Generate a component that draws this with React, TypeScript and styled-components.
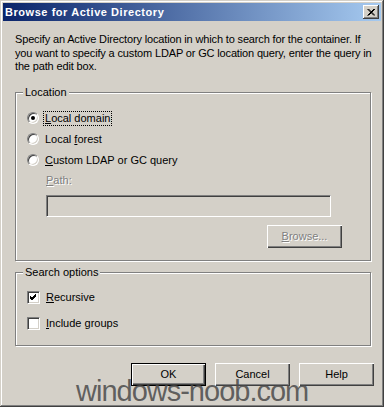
import styled, { createGlobalStyle } from "styled-components"

const GlobalStyle = createGlobalStyle`
  html, body {
    margin: 0;
    padding: 0;
    background: #d4d0c8;
  }
  * {
    box-sizing: border-box;
  }
`

const WindowFrame = styled.div`
  position: relative;
  width: 384px;
  height: 407px;
  padding: 3px;
  background: #d4d0c8;
  font-family: "Liberation Sans", Arial, sans-serif;
  font-size: 11px;
  color: #000;
  box-shadow:
    inset -1px -1px 0 #404040,
    inset 1px 1px 0 #d4d0c8,
    inset -2px -2px 0 #808080,
    inset 2px 2px 0 #ffffff;
  overflow: hidden;
`

const TitleBar = styled.div`
  height: 18px;
  display: flex;
  align-items: center;
  justify-content: space-between;
  padding: 0 2px 0 2px;
  background: linear-gradient(to right, #0a246a, #a6caf0);
`

const TitleText = styled.span`
  color: #fff;
  font-weight: 700;
  font-size: 11px;
  letter-spacing: 0.55px;
`

const CloseButton = styled.div`
  width: 16px;
  height: 14px;
  display: flex;
  align-items: center;
  justify-content: center;
  background: #d4d0c8;
  box-shadow:
    inset -1px -1px 0 #404040,
    inset 1px 1px 0 #ffffff,
    inset -2px -2px 0 #808080;
`

const Body = styled.div`
  padding: 12px 10px 0 12px;
`

const Description = styled.p`
  margin: 0;
  line-height: 13.5px;
  white-space: nowrap;
  letter-spacing: -0.15px;
`

const GroupBox = styled.div<{ $height: number; $top: number }>`
  position: relative;
  width: 356px;
  height: ${(p) => p.$height}px;
  margin-top: ${(p) => p.$top}px;
  border: 1px solid #808080;
  box-shadow: inset 1px 1px 0 #fff, 1px 1px 0 #fff;
  padding: 0 0 0 11px;
`

const Caption = styled.span`
  position: absolute;
  top: -7px;
  left: 7px;
  padding: 0 2px;
  background: #d4d0c8;
  line-height: 13px;
`

const OptionList = styled.div<{ $pad: number; $row: number }>`
  padding-top: ${(p) => p.$pad}px;
  display: grid;
  grid-auto-rows: ${(p) => p.$row}px;
`

const OptionRow = styled.label`
  display: flex;
  align-items: center;
  gap: 6px;
`

const RadioDot = styled.span<{ $checked?: boolean }>`
  position: relative;
  width: 12px;
  height: 12px;
  border-radius: 50%;
  background: #fff;
  border: 1px solid;
  border-color: #808080 #ffffff #ffffff #808080;
  box-shadow: inset 1px 1px 0 #404040, inset -1px -1px 0 #d4d0c8;

  &::after {
    content: "";
    display: ${(p) => (p.$checked ? "block" : "none")};
    position: absolute;
    left: 3px;
    top: 3px;
    width: 4px;
    height: 4px;
    border-radius: 50%;
    background: #000;
  }
`

const CheckBox = styled.span`
  width: 13px;
  height: 13px;
  display: flex;
  align-items: center;
  justify-content: center;
  background: #fff;
  border: 1px solid;
  border-color: #808080 #ffffff #ffffff #808080;
  box-shadow: inset 1px 1px 0 #404040, inset -1px -1px 0 #d4d0c8;
`

const OptionText = styled.span<{ $focused?: boolean }>`
  line-height: 13px;
  padding: 0 1px;
  margin-left: -1px;
  outline: ${(p) => (p.$focused ? "1px dotted #000" : "none")};
`

const DisabledLabel = styled.div`
  margin: 3px 0 0 19px;
  line-height: 13px;
  color: #808080;
  text-shadow: 1px 1px 0 #fff;
`

const PathField = styled.div`
  margin: 8px 0 0 19px;
  width: 285px;
  height: 22px;
  background: #d4d0c8;
  border: 1px solid;
  border-color: #808080 #ffffff #ffffff #808080;
  box-shadow: inset 1px 1px 0 #404040, inset -1px -1px 0 #d4d0c8;
`

const BrowseRow = styled.div`
  display: flex;
  justify-content: flex-end;
  margin-top: 8px;
  width: 315px;
`

const Button = styled.button<{ $default?: boolean; $disabled?: boolean }>`
  width: 75px;
  height: 23px;
  padding: 0;
  font-family: "Liberation Sans", Arial, sans-serif;
  font-size: 11px;
  background: #d4d0c8;
  color: ${(p) => (p.$disabled ? "#808080" : "#000")};
  text-shadow: ${(p) => (p.$disabled ? "1px 1px 0 #fff" : "none")};
  border: ${(p) => (p.$default ? "1px solid #000" : "none")};
  box-shadow: inset 1px 1px 0 #fff, inset -1px -1px 0 #404040, inset -2px -2px 0 #808080;
`

const ButtonRow = styled.div`
  display: flex;
  justify-content: flex-end;
  gap: 9px;
  margin-top: 17px;
  width: 359px;
`

const Watermark = styled.div`
  position: absolute;
  left: 76px;
  top: 375px;
  font-family: "Liberation Sans", Arial, sans-serif;
  font-size: 29px;
  letter-spacing: -1px;
  line-height: 32px;
  color: rgba(75, 75, 75, 0.85);
  pointer-events: none;
`

const CheckMark = () => (
  <svg width="7" height="7" viewBox="0 0 7 7">
    <path d="M0 2 L2 4 L6 0 M0 3 L2 5 L6 1 M0 4 L2 6 L6 2" stroke="#000" strokeWidth="1" fill="none" />
  </svg>
)

const CloseIcon = () => (
  <svg width="8" height="7" viewBox="0 0 8 7">
    <path d="M0.5 0 L7 6.5 M1.5 0 L8 6.5 M7 0 L0.5 6.5 M8 0 L1.5 6.5" stroke="#000" strokeWidth="1" fill="none" />
  </svg>
)

const App = () => {
  return (
    <>
      <GlobalStyle />
      <WindowFrame>
        <TitleBar>
          <TitleText>Browse for Active Directory</TitleText>
          <CloseButton>
            <CloseIcon />
          </CloseButton>
        </TitleBar>
        <Body>
          <Description>
            Specify an Active Directory location in which to search for the container. If
            <br />
            you want to specify a custom LDAP or GC location query, enter the query in
            <br />
            the path edit box.
          </Description>

          <GroupBox $height={169} $top={18}>
            <Caption>Location</Caption>
            <OptionList $pad={15} $row={21}>
              <OptionRow>
                <RadioDot $checked />
                <OptionText $focused>
                  <u>L</u>ocal domain
                </OptionText>
              </OptionRow>
              <OptionRow>
                <RadioDot />
                <OptionText>
                  Local <u>f</u>orest
                </OptionText>
              </OptionRow>
              <OptionRow>
                <RadioDot />
                <OptionText>
                  <u>C</u>ustom LDAP or GC query
                </OptionText>
              </OptionRow>
            </OptionList>
            <DisabledLabel>
              <u>P</u>ath:
            </DisabledLabel>
            <PathField />
            <BrowseRow>
              <Button $disabled>
                <u>B</u>rowse...
              </Button>
            </BrowseRow>
          </GroupBox>

          <GroupBox $height={74} $top={11}>
            <Caption>Search options</Caption>
            <OptionList $pad={12} $row={26}>
              <OptionRow>
                <CheckBox>
                  <CheckMark />
                </CheckBox>
                <OptionText>
                  <u>R</u>ecursive
                </OptionText>
              </OptionRow>
              <OptionRow>
                <CheckBox />
                <OptionText>
                  <u>I</u>nclude groups
                </OptionText>
              </OptionRow>
            </OptionList>
          </GroupBox>

          <ButtonRow>
            <Button $default>OK</Button>
            <Button>Cancel</Button>
            <Button>Help</Button>
          </ButtonRow>
        </Body>
        <Watermark>windows-noob.com</Watermark>
      </WindowFrame>
    </>
  )
}

export default App
